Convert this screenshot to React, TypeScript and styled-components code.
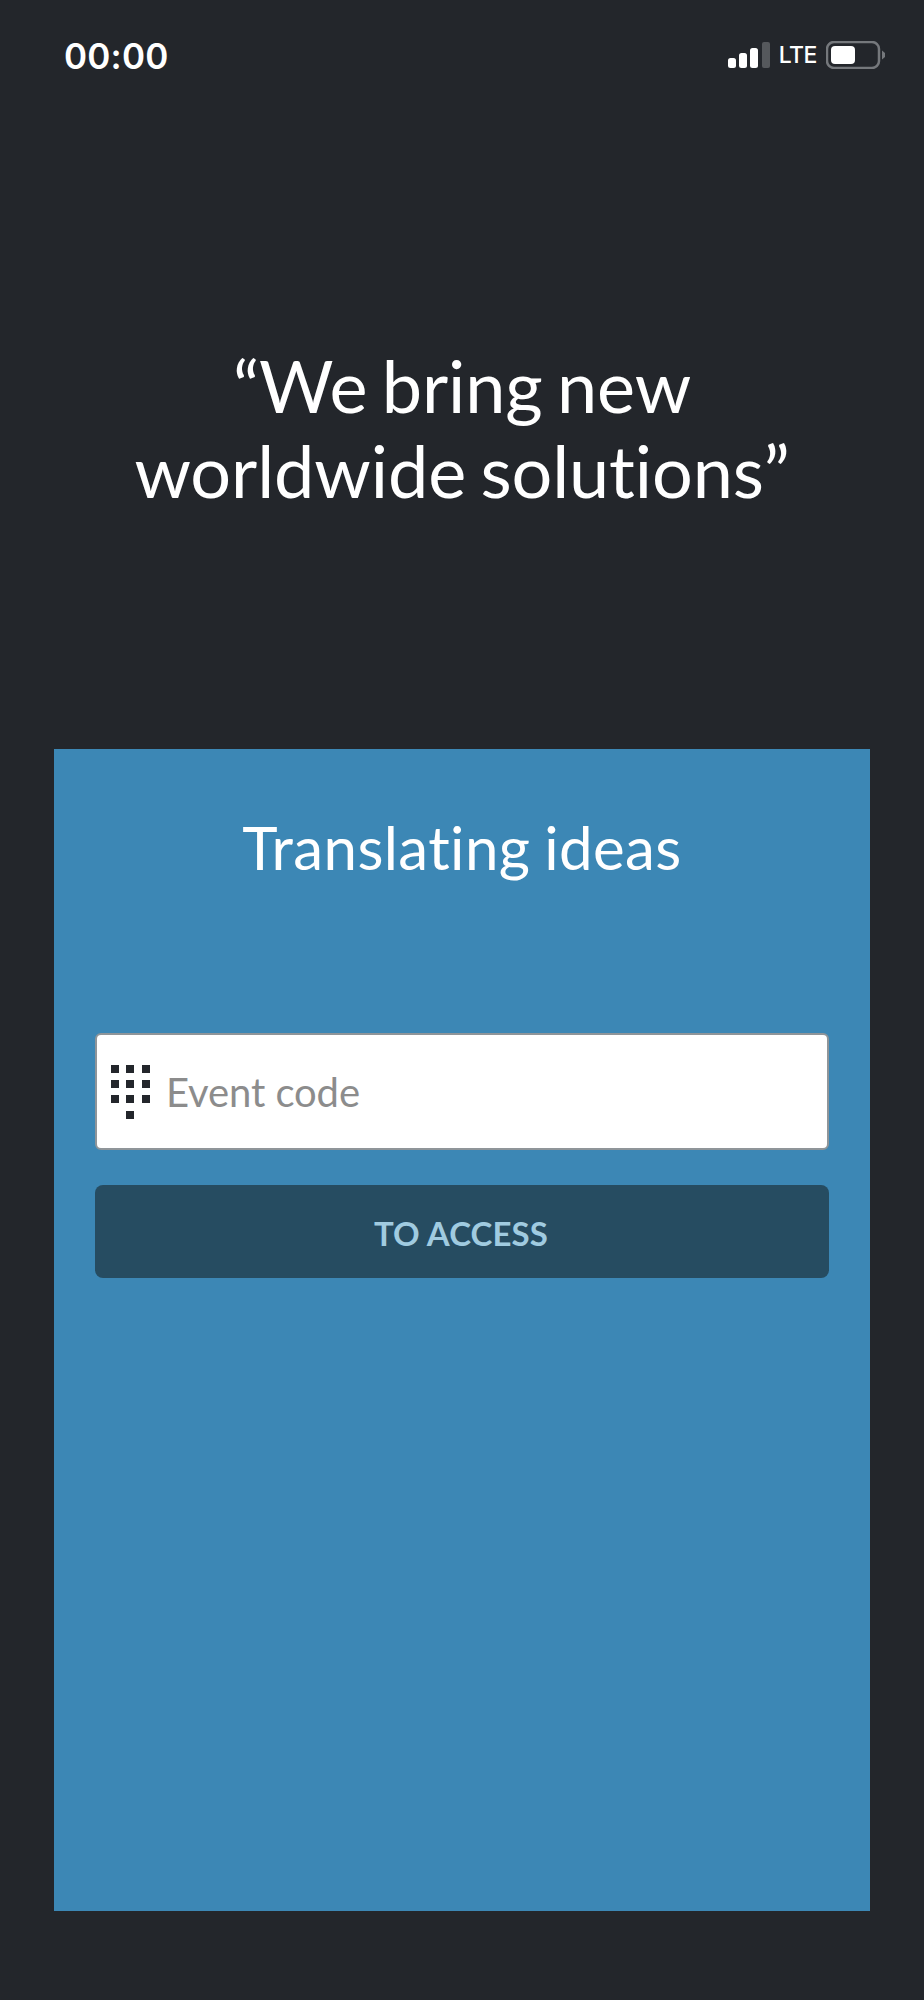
import React from "react";
import styled, { createGlobalStyle } from "styled-components";

const GlobalStyle = createGlobalStyle`
    html, body {
        margin: 0;
        padding: 0;
        background: #23262b;
    }
`;

const Page = styled.div`
    width: 924px;
    height: 2000px;
    background: #23262b;
    font-family: "Lato", "Liberation Sans", sans-serif;
    font-variant-ligatures: none;
    display: flex;
    flex-direction: column;
    overflow: hidden;
`;
const StatusBar = styled.div`
    height: 110px;
    box-sizing: border-box;
    padding: 36px 38px 0 64px;
    display: flex;
    justify-content: space-between;
    align-items: flex-start;
`;
const Clock = styled.span`
    font-family: "Inter", "Liberation Sans", sans-serif;
    font-size: 35px;
    line-height: 40px;
    font-weight: 600;
    letter-spacing: 0.2px;
    color: #fff;
`;
const StatusIcons = styled.div`
    display: flex;
    align-items: center;
    height: 40px;
    margin-top: -1px;
`;
const Network = styled.span`
    font-family: "Inter", "Liberation Sans", sans-serif;
    font-size: 23px;
    font-weight: 500;
    letter-spacing: -0.5px;
    color: #fff;
    margin: 0 9px 0 9px;
`;
const Quote = styled.h1`
    margin: 233px 0 0;
    font-size: 72px;
    line-height: 85px;
    font-weight: 400;
    letter-spacing: -0.1px;
    word-spacing: -4px;
    color: #fff;
    text-align: center;
`;
const Panel = styled.div`
    margin: 236px 0 0 54px;
    width: 816px;
    height: 1162px;
    box-sizing: border-box;
    background: #3c87b5;
    padding: 62px 41px 0;
    display: flex;
    flex-direction: column;
`;
const PanelTitle = styled.h2`
    margin: 0;
    font-size: 60px;
    line-height: 72px;
    font-weight: 400;
    letter-spacing: 0.4px;
    word-spacing: -2px;
    color: #fff;
    text-align: center;
`;
const Field = styled.label`
    margin-top: 150px;
    height: 117px;
    box-sizing: border-box;
    background: #fff;
    border: 2px solid #8f9599;
    border-radius: 6px;
    display: flex;
    align-items: center;
    padding-left: 14px;
`;
const CodeInput = styled.input`
    flex: 1;
    min-width: 0;
    border: 0;
    outline: 0;
    background: transparent;
    margin-left: 16px;
    padding: 0;
    font-family: inherit;
    font-variant-ligatures: none;
    font-size: 40px;
    letter-spacing: -0.1px;
    color: #222;
    &::placeholder {
        color: #8c8c8c;
        opacity: 1;
    }
`;
const AccessButton = styled.button`
    margin-top: 35px;
    height: 93px;
    border: 0;
    border-radius: 8px;
    background: #264c61;
    color: #a0cbe0;
    font-family: inherit;
    font-size: 33px;
    line-height: 40px;
    font-weight: 700;
    padding: 2px 2px 0 0;
    letter-spacing: 0.1px;
`;

const SignalIcon = () => (
    <svg width="42" height="26" viewBox="0 0 42 26">
        <rect x="0" y="16" width="8" height="10" rx="2.5" fill="#fff" />
        <rect x="11" y="11" width="8" height="15" rx="2.5" fill="#fff" />
        <rect x="22" y="6" width="8" height="20" rx="2.5" fill="#fff" />
        <rect x="34" y="0" width="8" height="26" rx="2" fill="#55585c" />
    </svg>
);

const BatteryIcon = () => (
    <svg width="60" height="28" viewBox="0 0 60 28">
        <rect x="1" y="1" width="52" height="26" rx="7" fill="none" stroke="#75787c" strokeWidth="2.5" />
        <rect x="5" y="5" width="24" height="18" rx="4" fill="#fff" />
        <path d="M56 9.5 L59 12 V16 L56 18.5 Z" fill="#75787c" />
    </svg>
);

const KeypadIcon = () => {
    const dots = [
        [0, 0], [15, 0], [31, 0],
        [0, 15], [15, 15], [31, 15],
        [0, 30], [15, 30], [31, 30],
        [15, 46],
    ];
    return (
        <svg width="39" height="54" viewBox="0 0 39 54">
            {dots.map(([x, y]) => (
                <rect key={`${x}-${y}`} x={x} y={y} width="8" height="8" fill="#23262b" />
            ))}
        </svg>
    );
};

const App: React.FC = () => {
    return (
        <Page>
            <GlobalStyle />
            <StatusBar>
                <Clock>00:00</Clock>
                <StatusIcons>
                    <SignalIcon />
                    <Network>LTE</Network>
                    <BatteryIcon />
                </StatusIcons>
            </StatusBar>
            <Quote>
                “We bring new
                <br />
                worldwide solutions”
            </Quote>
            <Panel>
                <PanelTitle>Translating ideas</PanelTitle>
                <Field>
                    <KeypadIcon />
                    <CodeInput placeholder="Event code" />
                </Field>
                <AccessButton>TO ACCESS</AccessButton>
            </Panel>
        </Page>
    );
};

export default App;
